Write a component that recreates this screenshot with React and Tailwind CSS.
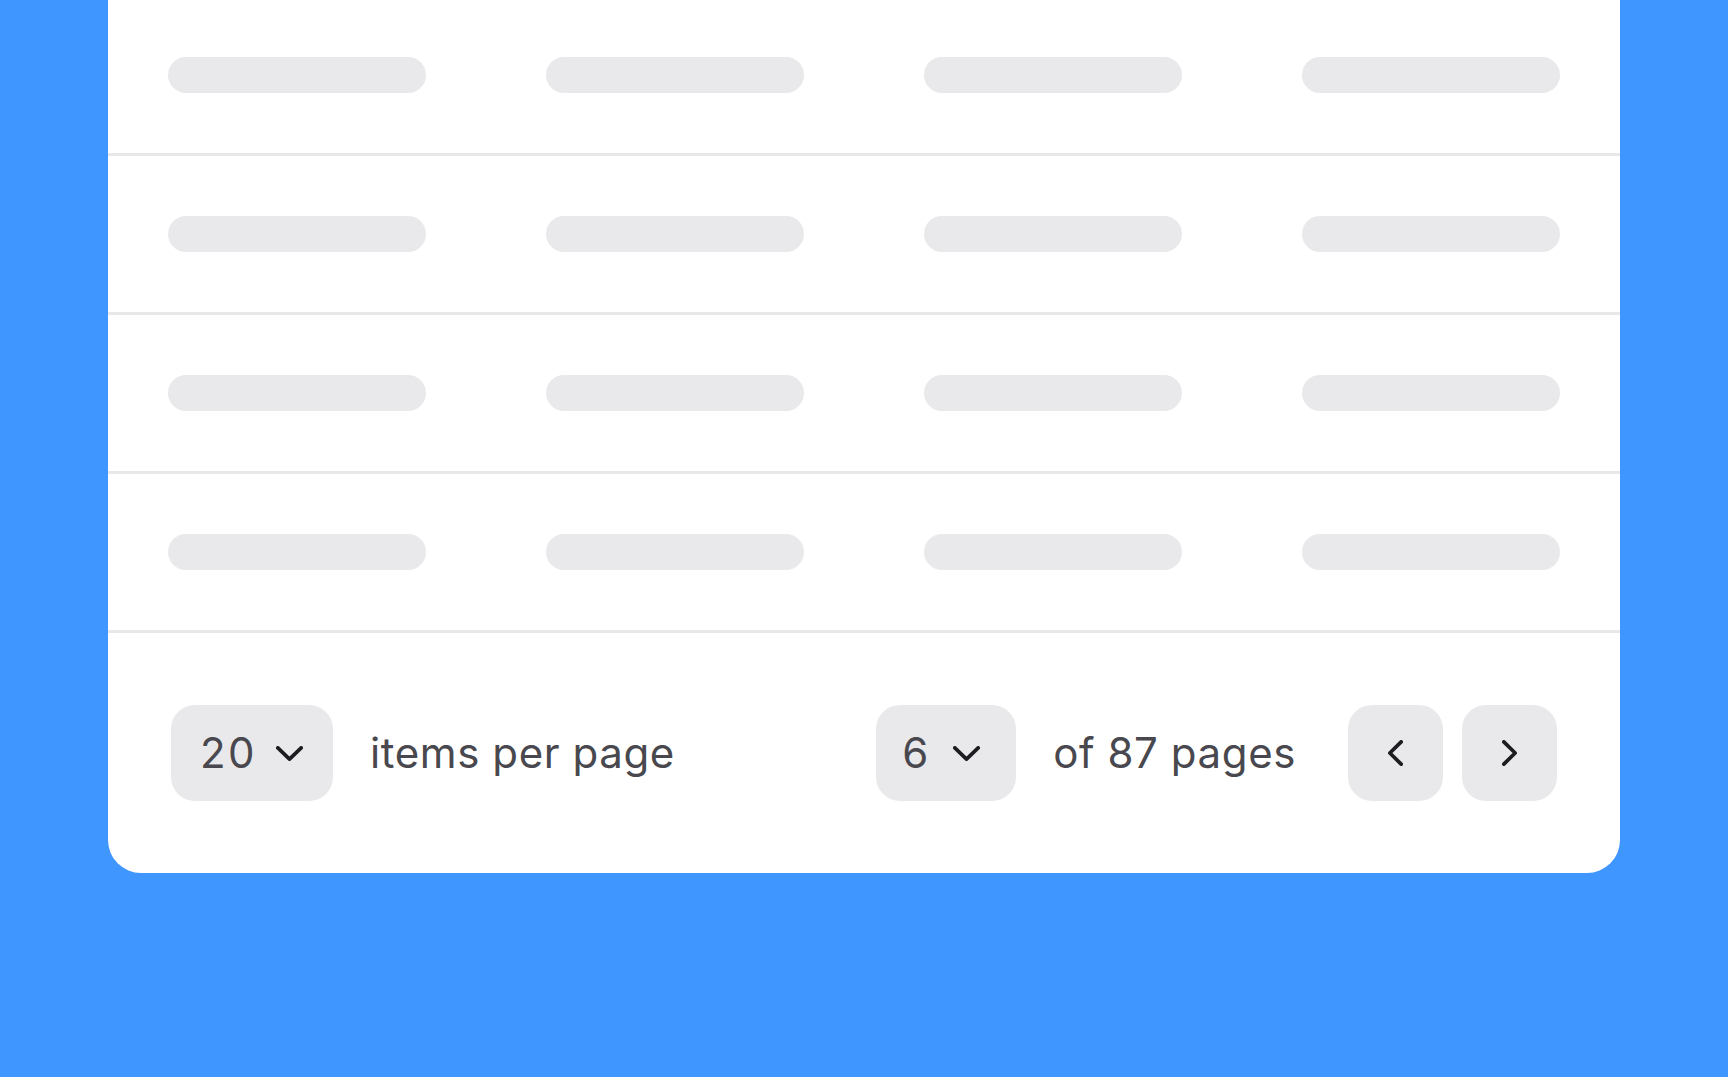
import React from 'react';

const ROWS = 4;
const COLS = 4;

const ChevronDown = () => (
  <svg width="27" height="15" viewBox="0 0 27 15" fill="none" className="shrink-0">
    <path
      d="M1.85 1.85 L13.5 13.15 L25.15 1.85"
      stroke="#1c1c21"
      strokeWidth="3.7"
      strokeLinecap="round"
      strokeLinejoin="round"
    />
  </svg>
);

const ChevronSide = ({ dir }) => (
  <svg width="15" height="26" viewBox="0 0 15 26" fill="none">
    <path
      d={dir === 'left' ? 'M13.15 1.85 L1.85 13 L13.15 24.15' : 'M1.85 1.85 L13.15 13 L1.85 24.15'}
      stroke="#1c1c21"
      strokeWidth="3.7"
      strokeLinecap="round"
      strokeLinejoin="round"
    />
  </svg>
);

const SkeletonRow = () => (
  <div className="grid grid-cols-4 gap-[120px] border-b-[3px] border-[#e8e8e9] px-[60px] py-[60px]">
    {Array.from({ length: COLS }).map((_, i) => (
      <div key={i} className="h-[36px] w-full rounded-full bg-[#e9e9eb]" />
    ))}
  </div>
);

const PageSelect = ({ value, className }) => (
  <button className={`flex h-24 items-center rounded-3xl bg-[#e9e9eb] ${className}`}>
    <span className="tracking-[2.5px]">{value}</span>
    <ChevronDown />
  </button>
);

export default function App() {
  return (
    <div
      className="min-h-screen bg-[#4096ff] px-[108px]"
      style={{ fontFamily: 'Inter, "Noto Sans", sans-serif' }}
    >
      <div className="-mt-[3px] overflow-hidden rounded-b-[33px] bg-white">
        {Array.from({ length: ROWS }).map((_, i) => (
          <SkeletonRow key={i} />
        ))}

        {/* pagination footer */}
        <div className="flex items-center justify-between px-[63px] py-[72px] text-[42px] leading-none tracking-[0.6px] text-[#48484e]">
          <div className="flex items-center gap-[37px]">
            <PageSelect value="20" className="w-[162px] gap-[19px] pl-[29px]" />
            <span>items per page</span>
          </div>

          <div className="flex items-center">
            <PageSelect value="6" className="w-[140px] gap-[22px] pl-[26px]" />
            <span className="ml-[37px]">of 87 pages</span>
            <div className="ml-[52px] flex gap-[19px]">
              <button className="flex h-24 w-[95px] items-center justify-center rounded-3xl bg-[#e9e9eb]">
                <ChevronSide dir="left" />
              </button>
              <button className="flex h-24 w-[95px] items-center justify-center rounded-3xl bg-[#e9e9eb]">
                <ChevronSide dir="right" />
              </button>
            </div>
          </div>
        </div>
      </div>
    </div>
  );
}
